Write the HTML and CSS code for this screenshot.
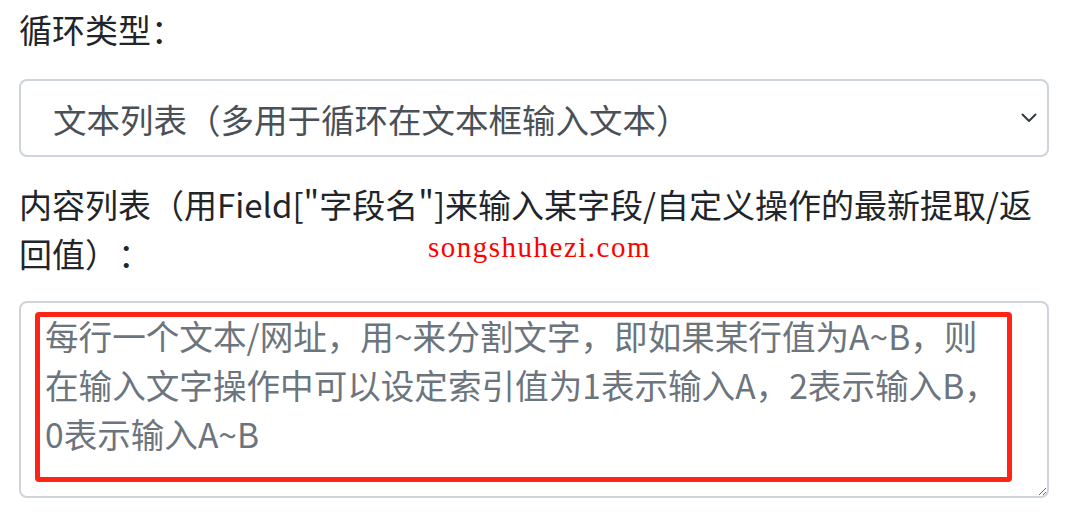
FILE: index.html
```html
<!DOCTYPE html>
<html lang="zh-CN">
<head>
<meta charset="utf-8">
<title>循环设置</title>
<link rel="stylesheet" href="styles.css">
</head>
<body>
<div class="form">
  <label class="label label-first" for="loopType">循环类型：</label>
  <select id="loopType" class="select">
    <option>文本列表（多用于循环在文本框输入文本）</option>
  </select>
  <label class="label label-second" for="content">内容列表（用Field["字段名"]来输入某字段/自定义操作的最新提取/返回值）：</label>
  <div class="area-wrap">
    <textarea id="content" class="area" placeholder="每行一个文本/网址，用~来分割文字，即如果某行值为A~B，则&#10;在输入文字操作中可以设定索引值为1表示输入A，2表示输入B，&#10;0表示输入A~B"></textarea>
    <div class="highlight"></div>
  </div>
  <div class="watermark">songshuhezi.com</div>
</div>
</body>
</html>
```

FILE: styles.css
```css
html, body {
  margin: 0;
  padding: 0;
  background: #ffffff;
}
body {
  font-family: "Noto Sans CJK SC", "Noto Sans", sans-serif;
  font-size: 33px;
  line-height: 49px;
  color: #212529;
  text-spacing-trim: space-all;
}
.form {
  position: relative;
  display: flex;
  flex-direction: column;
  padding: 5px 28px 0 19px;
}
.label {
  display: block;
}
.label-first {
  margin-bottom: 25px;
}
.select {
  appearance: none;
  -webkit-appearance: none;
  box-sizing: border-box;
  width: 100%;
  height: 78px;
  margin: 0 0 23px 0;
  padding: 0 60px 0 32px;
  font-family: inherit;
  font-size: 33.5px;
  line-height: 49px;
  color: #495057;
  text-spacing-trim: space-all;
  background-color: #fff;
  background-image: url("data:image/svg+xml,%3csvg xmlns='http://www.w3.org/2000/svg' viewBox='0 0 16 10'%3e%3cpath fill='none' stroke='%23343a40' stroke-width='2' stroke-linecap='round' stroke-linejoin='round' d='M1.5 1.5l6.5 6.5 6.5-6.5'/%3e%3c/svg%3e");
  background-repeat: no-repeat;
  background-position: right 10px center;
  background-size: 16px 10px;
  border: 2px solid #ced4da;
  border-radius: 8px;
  outline: none;
}
.label-second {
  margin-bottom: 23px;
}
.area-wrap {
  position: relative;
}
.area {
  display: block;
  box-sizing: border-box;
  width: 100%;
  height: 197px;
  margin: 0;
  padding: 8px 20px 0 24px;
  font-family: inherit;
  font-size: 33.6px;
  line-height: 49px;
  color: #495057;
  text-spacing-trim: space-all;
  background: #fff;
  border: 2px solid #ced4da;
  border-radius: 8px;
  outline: none;
}
.area::placeholder {
  color: #6c757d;
  opacity: 1;
}
.highlight {
  position: absolute;
  left: 16px;
  top: 11px;
  width: 977px;
  height: 170px;
  box-sizing: border-box;
  border: 5px solid #ff2416;
  border-radius: 4px;
  pointer-events: none;
}
.watermark {
  position: absolute;
  left: 428px;
  top: 229px;
  font-family: "Liberation Serif", serif;
  font-size: 29px;
  line-height: 36px;
  letter-spacing: 1.5px;
  color: #ff0000;
}
```
